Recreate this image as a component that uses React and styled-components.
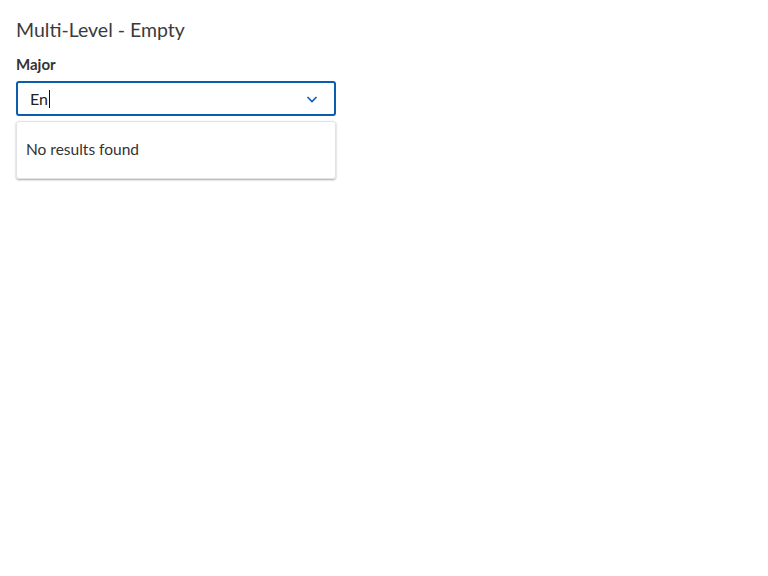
import React from 'react';
import styled, { createGlobalStyle } from 'styled-components';

const GlobalStyle = createGlobalStyle`
  body {
    margin: 0;
    background: #fff;
    font-family: "Source Sans Pro", Lato, "Open Sans", sans-serif;
    color: #333;
  }
`;

const Page = styled.div`
  padding: 16px;
  display: flex;
  flex-direction: column;
`;

const Title = styled.h2`
  margin: 0 0 10px;
  font-size: 19.5px;
  font-weight: 400;
  line-height: 28px;
  color: #3b3b3b;
`;

const Field = styled.div`
  width: 320px;
  display: flex;
  flex-direction: column;
`;

const Label = styled.label`
  font-size: 15px;
  font-weight: 700;
  line-height: 20px;
  color: #333;
  margin-bottom: 7px;
`;

const Control = styled.div`
  height: 35px;
  box-sizing: border-box;
  border: 2px solid #0b5dad;
  border-radius: 3px;
  display: flex;
  align-items: center;
  padding: 0 12px;
`;

const Caret = styled.span`
  display: inline-block;
  width: 1px;
  height: 18px;
  background: #111;
  margin-left: 1px;
`;

const Typed = styled.span`
  font-size: 16px;
  color: #222;
  display: flex;
  align-items: center;
  flex: 1;
`;

const Chevron = styled.svg`
  width: 12px;
  height: 12px;
  margin-right: 4px;
`;

const Menu = styled.div`
  margin-top: 5px;
  height: 58px;
  box-sizing: border-box;
  border: 1px solid #e3e3e3;
  border-radius: 3px;
  box-shadow: 0 1px 2px rgba(0, 0, 0, 0.35);
  display: flex;
  align-items: center;
  padding: 0 0 2px 9px;
  font-size: 15.5px;
  color: #333;
`;

export default function App() {
  return (
    <>
      <GlobalStyle />
      <Page>
        <Title>Multi-Level - Empty</Title>
        <Field>
          <Label>Major</Label>
          <Control>
            <Typed>
              En<Caret />
            </Typed>
            <Chevron viewBox="0 0 12 12" fill="none">
              <path d="M1.5 4 L6 8.5 L10.5 4" stroke="#0b5dad" strokeWidth="1.6" />
            </Chevron>
          </Control>
          <Menu>No results found</Menu>
        </Field>
      </Page>
    </>
  );
}
